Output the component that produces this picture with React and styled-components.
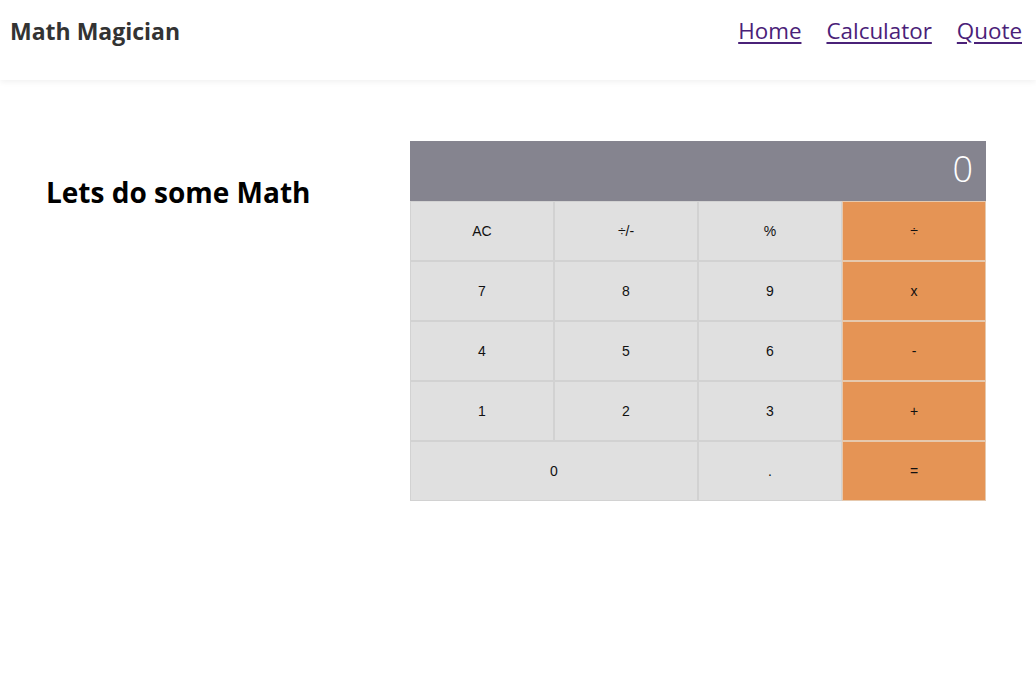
import React, { useState } from "react";
import styled, { createGlobalStyle } from "styled-components";

const GlobalStyle = createGlobalStyle`
  html, body {
    margin: 0;
    padding: 0;
    background: #fff;
    font-family: "Open Sans", "Noto Sans", sans-serif;
  }
`;

const Header = styled.header`
  height: 80px;
  display: flex;
  justify-content: space-between;
  align-items: flex-start;
  padding: 0 14px 0 10px;
  box-shadow: 0 2px 6px rgba(0, 0, 0, 0.06);
`;

const Brand = styled.h1`
  margin: 16px 0 0;
  font-size: 23px;
  font-weight: 700;
  color: #333;
  line-height: 30px;
`;

const Nav = styled.nav`
  display: flex;
  gap: 25px;
  margin-top: 15px;
`;

const NavLink = styled.a`
  font-size: 22.4px;
  line-height: 32px;
  color: #4a2178;
  text-decoration: underline;
  text-underline-offset: 3px;
  text-decoration-thickness: 1.5px;
`;

const Main = styled.main`
  display: flex;
  align-items: flex-start;
  padding: 61px 50px 0 46px;
`;

const Intro = styled.h2`
  flex: 1;
  margin: 32px 0 0;
  font-size: 28px;
  font-weight: 700;
  color: #000;
  line-height: 38px;
`;

const Calc = styled.div`
  display: grid;
  grid-template-columns: repeat(4, 144px);
  grid-auto-rows: 60px;
`;

const Display = styled.div`
  grid-column: 1 / -1;
  background: #85848f;
  color: #fff;
  font-size: 36px;
  font-weight: 300;
  display: flex;
  justify-content: flex-end;
  align-items: center;
  padding: 0 13px 6px;
`;

const Key = styled.button`
  grid-column: span ${(p) => p.span || 1};
  border: 1px solid ${(p) => (p.op ? "#e6c9ae" : "#d2d2d2")};
  background: ${(p) => (p.op ? "#e59455" : "#e0e0e0")};
  font-family: "Liberation Sans", Arial, sans-serif;
  font-size: 14px;
  color: #111;
  padding: 0;
  cursor: pointer;
`;

const rows = [
  ["AC", "÷/-", "%", "÷"],
  ["7", "8", "9", "x"],
  ["4", "5", "6", "-"],
  ["1", "2", "3", "+"],
];

export default function App() {
  const [value] = useState("0");
  return (
    <>
      <GlobalStyle />
      <Header>
        <Brand>Math Magician</Brand>
        <Nav>
          <NavLink href="#home">Home</NavLink>
          <NavLink href="#calculator">Calculator</NavLink>
          <NavLink href="#quote">Quote</NavLink>
        </Nav>
      </Header>
      <Main>
        <Intro>Lets do some Math</Intro>
        <Calc>
          <Display>{value}</Display>
          {rows.map((row) =>
            row.map((k, i) => (
              <Key key={k + i} op={i === 3}>
                {k}
              </Key>
            ))
          )}
          <Key span={2}>0</Key>
          <Key>.</Key>
          <Key op>=</Key>
        </Calc>
      </Main>
    </>
  );
}
